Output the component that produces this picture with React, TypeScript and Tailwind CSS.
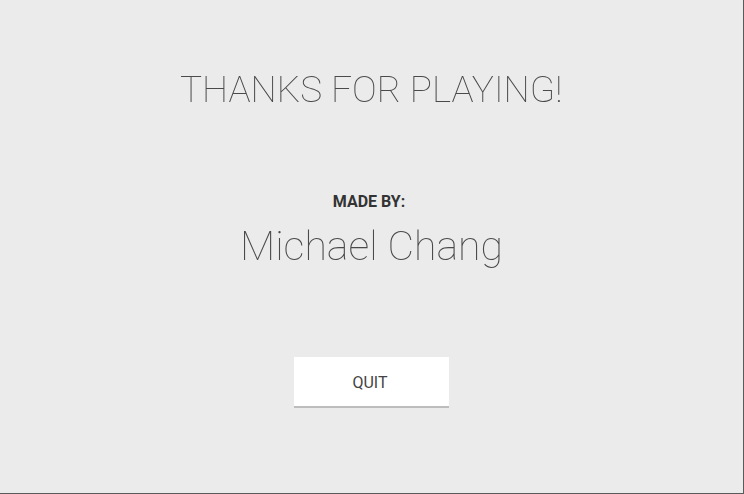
export default function App() {
  return (
    <div
      className="w-[744px] h-[494px] bg-[#ebebeb] border-r border-b border-[#5a5a5a] flex flex-col items-center antialiased"
      style={{ fontFamily: "Roboto, 'Liberation Sans', sans-serif" }}
    >
      <h1 className="mt-[66px] text-[37px] leading-[48px] font-thin text-[#4a4a4a] will-change-transform">
        THANKS FOR PLAYING!
      </h1>
      <div className="mt-[79px] mr-[5px] text-[16px] leading-[18px] font-bold text-[#333333]">MADE BY:</div>
      <div className="mt-[10px] text-[41px] leading-[50px] font-thin text-[#4a4a4a] will-change-transform">Michael Chang</div>
      <button className="mt-[86px] w-[155px] h-[51px] bg-white border-b-2 border-[#bdbdbd] text-[16px] text-[#444444] flex items-center justify-center pt-[2px] pr-[3px]">
        QUIT
      </button>
    </div>
  );
}
